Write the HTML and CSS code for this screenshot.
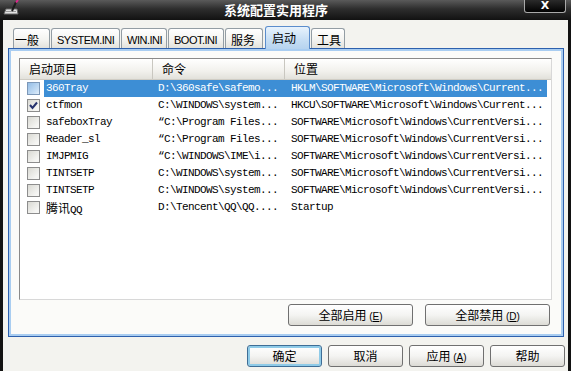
FILE: index.html
```html
<!DOCTYPE html>
<html lang="zh-CN">
<head>
    <meta charset="UTF-8">
    <title>系统配置实用程序</title>
    <link rel="stylesheet" href="styles.css">
</head>
<body>
    <div class="window">
        <div class="titlebar">
            <svg class="app-icon" width="16" height="15" viewBox="0 0 16 15">
                <polygon points="1,14 3,9 14,9 15,14" fill="#e4e4e4" stroke="#6a6a6a" stroke-width="1"/>
                <line x1="3" y1="11.5" x2="13" y2="11.5" stroke="#9a9a9a"/>
                <line x1="9" y1="11" x2="13" y2="2" stroke="#1c1c1c" stroke-width="2"/>
                <line x1="13" y1="2.5" x2="15" y2="0" stroke="#e2248e" stroke-width="2"/>
            </svg>
            <div class="title">系统配置实用程序</div>
            <div class="close">X</div>
        </div>
        <div class="body">
            <div class="tabs">
                <div class="tab first" style="width:37px">一般</div>
                <div class="tab latin" style="width:69px">SYSTEM.INI</div>
                <div class="tab latin" style="width:46px">WIN.INI</div>
                <div class="tab latin" style="width:56px">BOOT.INI</div>
                <div class="tab" style="width:38px">服务</div>
                <div class="tab on" style="width:45px">启动</div>
                <div class="tab" style="width:34px">工具</div>
            </div>
            <div class="panel">
                <div class="list">
                    <div class="list-head">
                        <div class="hcell">启动项目</div>
                        <div class="hcell">命令</div>
                        <div class="hcell">位置</div>
                    </div>
                    <div class="row sel">
                        <div class="chk"><span class="cb hot"></span></div>
                        <div class="cell">360Tray</div>
                        <div class="cell">D:\360safe\safemo...</div>
                        <div class="cell">HKLM\SOFTWARE\Microsoft\Windows\Current...</div>
                    </div>
                    <div class="row">
                        <div class="chk"><span class="cb"><svg width="11" height="11" viewBox="0 0 11 11"><polyline points="2,5 4.5,8 9,2.5" fill="none" stroke="#26326e" stroke-width="2"/></svg></span></div>
                        <div class="cell">ctfmon</div>
                        <div class="cell">C:\WINDOWS\system...</div>
                        <div class="cell">HKCU\SOFTWARE\Microsoft\Windows\Current...</div>
                    </div>
                    <div class="row">
                        <div class="chk"><span class="cb"></span></div>
                        <div class="cell">safeboxTray</div>
                        <div class="cell">“C:\Program Files...</div>
                        <div class="cell">SOFTWARE\Microsoft\Windows\CurrentVersi...</div>
                    </div>
                    <div class="row">
                        <div class="chk"><span class="cb"></span></div>
                        <div class="cell">Reader_sl</div>
                        <div class="cell">“C:\Program Files...</div>
                        <div class="cell">SOFTWARE\Microsoft\Windows\CurrentVersi...</div>
                    </div>
                    <div class="row">
                        <div class="chk"><span class="cb"></span></div>
                        <div class="cell">IMJPMIG</div>
                        <div class="cell">“C:\WINDOWS\IME\i...</div>
                        <div class="cell">SOFTWARE\Microsoft\Windows\CurrentVersi...</div>
                    </div>
                    <div class="row">
                        <div class="chk"><span class="cb"></span></div>
                        <div class="cell">TINTSETP</div>
                        <div class="cell">C:\WINDOWS\system...</div>
                        <div class="cell">SOFTWARE\Microsoft\Windows\CurrentVersi...</div>
                    </div>
                    <div class="row">
                        <div class="chk"><span class="cb"></span></div>
                        <div class="cell">TINTSETP</div>
                        <div class="cell">C:\WINDOWS\system...</div>
                        <div class="cell">SOFTWARE\Microsoft\Windows\CurrentVersi...</div>
                    </div>
                    <div class="row">
                        <div class="chk"><span class="cb"></span></div>
                        <div class="cell"><span class="cjk">腾讯</span>QQ</div>
                        <div class="cell">D:\Tencent\QQ\QQ....</div>
                        <div class="cell">Startup</div>
                    </div>
                </div>
                <div class="panel-buttons">
                    <button class="btn wide">全部启用 <span class="key">(<u>E</u>)</span></button>
                    <button class="btn wide">全部禁用 <span class="key">(<u>D</u>)</span></button>
                </div>
            </div>
            <div class="dialog-buttons">
                <button class="btn default">确定</button>
                <button class="btn">取消</button>
                <button class="btn">应用 <span class="key">(<u>A</u>)</span></button>
                <button class="btn">帮助</button>
            </div>
        </div>
    </div>
</body>
</html>
```

FILE: styles.css
```css
body{
    margin: 0;
    width: 571px;
    height: 371px;
    overflow: hidden;
    background: #111;
    font-family: "Noto Sans CJK SC", sans-serif;
    font-size: 12px;
    color: #000;
}
.window{
    height: 371px;
    display: flex;
    flex-direction: column;
}

/* title bar */
.titlebar{
    height: 20px;
    display: flex;
    align-items: flex-start;
    background: linear-gradient(#5a5a5a 0, #2d2d2d 45%, #121212 100%);
    color: #fff;
}
.app-icon{
    margin-left: 3px;
    flex: none;
}
.title{
    flex: 1;
    text-align: center;
    padding-left: 9px;
    font-size: 13px;
    font-weight: bold;
    line-height: 20px;
}
.close{
    width: 40px;
    height: 12px;
    margin-right: 5px;
    border: 1px solid #a9a9a9;
    border-top: none;
    border-radius: 0 0 3px 3px;
    background: linear-gradient(#2a2a2a, #000);
    font-family: "DejaVu Sans", sans-serif;
    font-size: 11px;
    font-weight: bold;
    line-height: 11px;
    text-align: center;
}

/* dialog body */
.body{
    flex: 1;
    border-left: 3px solid #121212;
    border-right: 3px solid #121212;
    background: #f3f3ef;
    padding-left: 5px;
}
.tabs{
    height: 28px;
    display: flex;
    align-items: flex-end;
    padding-left: 5px;
}
.tab{
    height: 20px;
    box-sizing: border-box;
    margin-right: 1px;
    padding: 3px 0 0 5px;
    line-height: 16px;
    border: 1px solid #939da4;
    border-bottom: none;
    border-radius: 3px 3px 0 0;
    background: linear-gradient(#ffffff, #f4f4f1 55%, #e3e2dc);
}
.tab.first{
    padding-left: 1px;
}
.tab.latin{
    font-family: "Liberation Sans", sans-serif;
    font-size: 11px;
    letter-spacing: -0.5px;
}
.tab.on{
    height: 23px;
    margin: 0 1px -1px 1px;
    padding: 3px 0 0 6px;
    border-color: #5b8dcc;
    background: linear-gradient(#e8f3fd, #c6def4 60%, #b6d3ef);
    position: relative;
    z-index: 1;
}

.panel{
    margin-right: 4px;
    height: 289px;
    box-sizing: border-box;
    border: 1px solid #2d60ad;
    box-shadow: inset 0 0 0 2px #a9cdf1;
    background: #fbfbf9;
    padding: 9px 11px 10px 10px;
}
.list{
    height: 242px;
    box-sizing: border-box;
    border: 1px solid;
    border-color: #8a8a8a #d8d8d8 #d8d8d8 #8a8a8a;
    background: #fff;
}
.list-head{
    display: grid;
    grid-template-columns: 133px 132px 262px;
    height: 21px;
    box-sizing: border-box;
    border-bottom: 1px solid #cfccc4;
    background: linear-gradient(#ffffff, #f2f1ed 60%, #e2e1db);
}
.hcell{
    padding-left: 9px;
    line-height: 20px;
    border-right: 1px solid #c9c7c0;
}
.hcell:last-child{
    border-right: none;
}
.row{
    display: grid;
    grid-template-columns: 24px 109px 132px 262px;
    height: 17px;
    line-height: 17px;
    font-family: "Liberation Mono", "Noto Sans CJK SC", monospace;
    font-size: 11px;
    letter-spacing: -0.6px;
    white-space: nowrap;
}
.cell{
    padding-left: 6px;
    overflow: hidden;
}
.cell:nth-child(2){
    padding-left: 2px;
}
.cell:nth-child(3){
    padding-left: 5px;
}
.row.sel .cell{
    background: #3d8ed5;
    color: #fff;
}
.cjk{
    font-family: "Noto Sans CJK SC", sans-serif;
    font-size: 12px;
    letter-spacing: 0;
}
.cb{
    display: block;
    width: 13px;
    height: 13px;
    margin: 2px 0 0 7px;
    box-sizing: border-box;
    border: 1px solid #8d8d8d;
    background: linear-gradient(135deg, #d9d9d3, #f6f6f4 80%);
}
.cb svg{
    display: block;
}
.cb.hot{
    border-color: #7d98b8;
    background: linear-gradient(135deg, #94bde6, #c5ddf4 70%, #e2eefa);
}

/* buttons */
.panel-buttons{
    display: flex;
    justify-content: flex-end;
    gap: 12px;
    margin-top: 4px;
    padding-right: 2px;
}
.dialog-buttons{
    display: flex;
    justify-content: flex-end;
    gap: 6px;
    margin-top: 8px;
    padding-right: 3px;
}
.btn{
    width: 75px;
    height: 22px;
    padding: 0;
    border: 1px solid #707070;
    border-radius: 3px;
    background: linear-gradient(#ffffff, #f4f4f2 50%, #dcdbd5);
    font-family: "Noto Sans CJK SC", sans-serif;
    font-size: 12px;
    color: #000;
    line-height: 20px;
}
.btn.wide{
    width: 125px;
}
.btn.default{
    border-color: #3f6e96;
    box-shadow: inset 0 0 0 2px #8fcbe8;
}
.key{
    font-family: "Liberation Sans", sans-serif;
    font-size: 10px;
}
```
